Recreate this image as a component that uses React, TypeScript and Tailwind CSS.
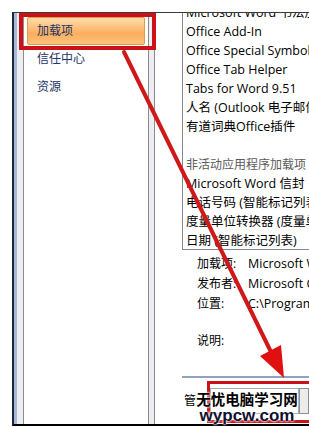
const installed = [
  'Microsoft Word 书法加载项',
  'Office Add-In',
  'Office Special Symbols',
  'Office Tab Helper',
  'Tabs for Word 9.51',
  '人名 (Outlook 电子邮件收件人)',
  '有道词典Office插件',
]

const inactive = [
  'Microsoft Word 信封',
  '电话号码 (智能标记列表)',
  '度量单位转换器 (度量单位转换器)',
  '日期 (智能标记列表)',
]

const details = [
  { label: '加载项:', value: 'Microsoft Word 书法加载项' },
  { label: '发布者:', value: 'Microsoft Corporation' },
  { label: '位置:', value: 'C:\\Program Files\\Microsoft Office' },
]

export default function App() {
  return (
    <div className="relative h-[428px] w-[309px] overflow-hidden bg-white pl-[12px] pt-[12px] font-['Open_Sans','Noto_Sans_CJK_SC',sans-serif] text-[12.5px] text-black">
      {/* window */}
      <div className="flex h-[414px] border-b-2 border-l-2 border-t border-b-black border-l-[#1b2540] border-t-[#3a3a3a]">
        <div className="w-[3px] shrink-0 bg-[#a7b9d6]" />
        <div className="w-[6px] shrink-0 bg-[#eceef2]" />

        {/* nav */}
        <div className="flex w-[126px] shrink-0 flex-col border-x border-[#8c8c8c] bg-white px-[3px] pt-[4px] text-[12px] text-[#1d3568]">
          <div className="flex h-[28px] items-center rounded-[2px] border border-[#e09a4a] bg-linear-to-b from-[#fedcaa] via-[#fbae5e] via-60% to-[#fcc27a] pl-[9px]">
            加载项
          </div>
          <div className="flex h-[28px] items-center pl-[10px]">信任中心</div>
          <div className="flex h-[28px] items-center pl-[10px]">资源</div>
        </div>
        <div className="w-[6px] shrink-0 border-r border-[#8c8c8c] bg-[#eceef2]" />

        {/* main */}
        <div className="flex min-w-0 flex-1 flex-col bg-white pl-[27px]">
          <div className="h-[237px] shrink-0 overflow-hidden border-b border-l border-[#828790]">
            <div className="-mt-[10px] whitespace-nowrap pl-[3px] leading-[19px]">
              {installed.map((name) => (
                <div key={name} className="h-[19px]">{name}</div>
              ))}
              <div className="h-[19px]" />
              <div className="h-[19px] text-[12px] text-[#5a5a5a]">非活动应用程序加载项</div>
              {inactive.map((name) => (
                <div key={name} className="h-[19px]">{name}</div>
              ))}
            </div>
          </div>

          <div className="mt-[4px] flex flex-col whitespace-nowrap pl-[15px] leading-[20px]">
            {details.map((d) => (
              <div key={d.label} className="flex h-[20px]">
                <span className="w-[51px] shrink-0 text-[12px]">{d.label}</span>
                <span>{d.value}</span>
              </div>
            ))}
            <div className="mt-[17px] flex h-[20px]">
              <span className="w-[51px] shrink-0 text-[12px]">说明:</span>
            </div>
          </div>

          <div className="mt-auto mb-[10px] flex flex-col">
            <div className="h-[2px] bg-[#8fa2c0]" />
            <div className="mt-[10px] flex h-[26px] items-center gap-[14px] pl-[2px] text-[12px]">
              <span>管</span>
              <div className="flex h-[26px] flex-1">
                <div className="w-[89px] border border-[#a5acb5] bg-white" />
                <div className="flex-1 border border-[#8e8f8f] bg-[#ececec]" />
              </div>
            </div>
          </div>
        </div>
      </div>

      {/* annotations */}
      <div className="absolute left-[19px] top-[13px] h-[37px] w-[137px] border-4 border-[#cc1219]" />
      <div className="absolute left-[207px] top-[381px] h-[42px] w-[120px] border-[3px] border-[#cc1219]" />

      <svg className="pointer-events-none absolute left-0 top-0" width="309" height="428" viewBox="0 0 309 428">
        <line x1="124" y1="52" x2="272" y2="354" stroke="#d01818" strokeWidth="4" strokeLinecap="round" />
        <polygon points="284,378 260,356 281,345" fill="#e01010" />
      </svg>

      <div className="absolute left-[190px] top-[389px] flex w-[114px] flex-col items-center font-bold [text-shadow:0_0_2px_#fff,0_0_2px_#fff,0_0_3px_#fff]">
        <span className="block h-[19px] font-['Noto_Sans_CJK_SC',sans-serif] text-[14.5px] leading-[19px] text-black">无忧电脑学习网</span>
        <span className="block h-[17px] font-['Liberation_Sans',sans-serif] text-[17px] leading-[15px] text-[#101030]">wypcw.com</span>
      </div>
    </div>
  )
}
